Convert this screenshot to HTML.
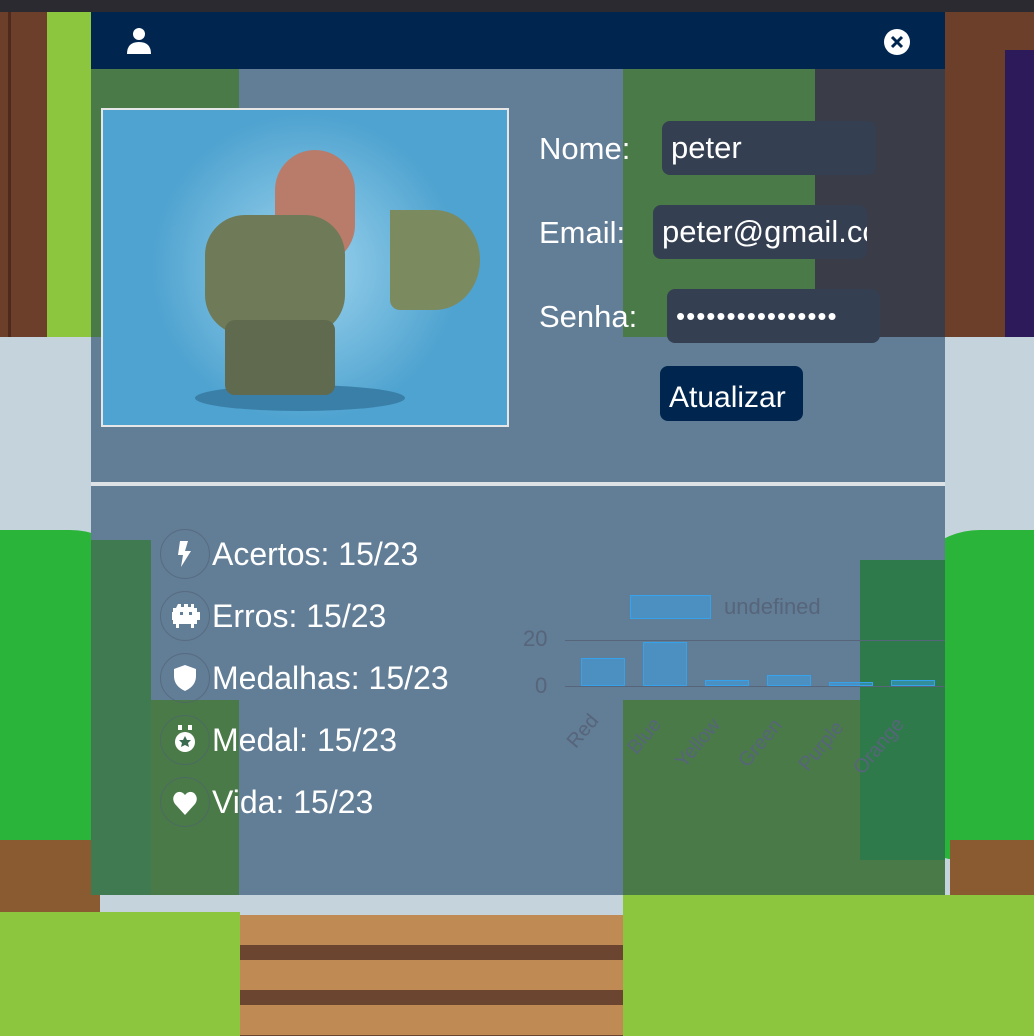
<!DOCTYPE html>
<html><head><meta charset="utf-8"><style>
*{margin:0;padding:0;box-sizing:border-box}
body{width:1034px;height:1036px;position:relative;overflow:hidden;background:#c5d3dc;font-family:"Liberation Sans",sans-serif}
.a{position:absolute}
.lbl{position:absolute;color:#fff;font-size:31px}
.inp{position:absolute;background:#343f52;border-radius:8px;color:#fff;font-size:31px;padding:9px 9px;overflow:hidden;white-space:nowrap;height:54px}
.st{position:absolute;left:212px;color:#fff;font-size:32px}
.ic{position:absolute;left:160px;width:50px;height:50px;border-radius:50%;border:1px solid rgba(80,95,115,.6)}
.ig{position:absolute;left:172px}
</style></head><body>
<div class="a" style="left:0;top:0;width:1034px;height:12px;background:#2a2a30"></div>
<div class="a" style="left:0;top:12px;width:47px;height:325px;background:#6b3f2a"></div>
<div class="a" style="left:8px;top:12px;width:3px;height:325px;background:#4d2a1c"></div>
<div class="a" style="left:47px;top:12px;width:44px;height:325px;background:#8cc63f"></div>
<div class="a" style="left:945px;top:12px;width:89px;height:325px;background:#6b3f2a"></div>
<div class="a" style="left:1005px;top:50px;width:29px;height:287px;background:#2c1a5a"></div>
<div class="a" style="left:0;top:530px;width:150px;height:330px;background:#2ab43a;border-radius:0 80px 60px 0"></div>
<div class="a" style="left:0;top:840px;width:100px;height:75px;background:#8a5a30"></div>
<div class="a" style="left:900px;top:530px;width:134px;height:330px;background:#2ab43a;border-radius:80px 0 0 60px"></div>
<div class="a" style="left:950px;top:840px;width:84px;height:75px;background:#8a5a30"></div>
<div class="a" style="left:0;top:912px;width:240px;height:124px;background:#8cc63f"></div>
<div class="a" style="left:623px;top:895px;width:411px;height:141px;background:#8cc63f"></div>
<div class="a" style="left:240px;top:915px;width:383px;height:121px;background:repeating-linear-gradient(#c08a55 0 30px,#6b4530 30px 45px)"></div>
<div class="a" style="left:91px;top:12px;width:854px;height:883px;background:#627d96"></div>
<div class="a" style="left:91px;top:69px;width:148px;height:268px;background:#4a7a48"></div>
<div class="a" style="left:623px;top:69px;width:192px;height:268px;background:#4a7a48"></div>
<div class="a" style="left:815px;top:69px;width:130px;height:268px;background:#3a3d48"></div>
<div class="a" style="left:91px;top:540px;width:60px;height:355px;background:#3f7a50"></div>
<div class="a" style="left:151px;top:700px;width:88px;height:195px;background:#4a7a48"></div>
<div class="a" style="left:623px;top:700px;width:322px;height:195px;background:#4a7a48"></div>
<div class="a" style="left:860px;top:560px;width:85px;height:300px;background:#2f7a4a"></div>
<div class="a" style="left:91px;top:482px;width:854px;height:4px;background:#dde2e6"></div>
<div class="a" style="left:91px;top:12px;width:854px;height:57px;background:#002650"></div>
<svg class="a" style="left:126px;top:27px" width="26" height="28" viewBox="0 0 26 28"><circle cx="13" cy="7" r="6" fill="#fff"/><path d="M1 27 Q1 15 13 15 Q25 15 25 27Z" fill="#fff"/></svg>
<svg class="a" style="left:883px;top:28px" width="28" height="28"><circle cx="14" cy="14" r="13" fill="#fff"/><path d="M9 9L19 19M19 9L9 19" stroke="#002650" stroke-width="3"/></svg>
<div class="a" style="left:101px;top:108px;width:408px;height:319px;background:radial-gradient(circle at 50% 50%,#9ed4ee,#4fa3d0 60%);border:2px solid #e6e6e6"></div>
<div class="a" style="left:195px;top:385px;width:210px;height:26px;border-radius:50%;background:#3a7fa8"></div>
<div class="a" style="left:275px;top:150px;width:80px;height:115px;border-radius:40px;background:#b97c6a"></div>
<div class="a" style="left:205px;top:215px;width:140px;height:120px;border-radius:40px;background:#6e7a58"></div>
<div class="a" style="left:225px;top:320px;width:110px;height:75px;background:#5f6a4e;border-radius:10px"></div>
<div class="a" style="left:390px;top:210px;width:90px;height:100px;background:#7c8a60;border-radius:0 50% 50% 10px"></div>
<div class="lbl" style="left:539px;top:131px">Nome:</div>
<div class="lbl" style="left:539px;top:215px">Email:</div>
<div class="lbl" style="left:539px;top:299px">Senha:</div>
<div class="inp" style="left:662px;top:121px;width:214px">peter</div>
<div class="inp" style="left:653px;top:205px;width:214px">peter@gmail.com</div>
<div class="inp" style="left:667px;top:289px;width:213px;letter-spacing:1px;font-size:26px;padding-top:12px">••••••••••••••••</div>
<div class="a" style="left:660px;top:366px;width:143px;height:55px;background:#002650;border-radius:8px;color:#fff;font-size:30px;padding:15px 0 0 9px;white-space:nowrap">Atualizar</div>
<div class="ic" style="top:529px"></div><div class="ic" style="top:591px"></div><div class="ic" style="top:653px"></div><div class="ic" style="top:715px"></div><div class="ic" style="top:777px"></div>
<svg class="ig" style="top:540px" width="26" height="28" viewBox="0 0 26 28"><path d="M8 1H16L13 11H19L9 27L11 15H6Z" fill="#fff"/></svg>
<svg class="ig" style="top:604px" width="28" height="24" viewBox="0 0 28 24"><path d="M6 0h3v3h3v-3h4v3h3v-3h3v4h3v4h3v8h-3v4h-3v4h-3v-4h-12v4h-3v-4h-3v-4h-3v-8h3v-4h3z" fill="#fff"/><rect x="8" y="8" width="3" height="3" fill="#627d96"/><rect x="17" y="8" width="3" height="3" fill="#627d96"/></svg>
<svg class="ig" style="top:664px" width="26" height="28" viewBox="0 0 26 28"><path d="M13 1L24 5V12Q24 22 13 27Q2 22 2 12V5Z" fill="#fff"/></svg>
<svg class="ig" style="top:724px" width="26" height="30" viewBox="0 0 26 30"><rect x="6" y="1" width="4" height="5" fill="#fff"/><rect x="16" y="1" width="4" height="5" fill="#fff"/><circle cx="13" cy="18" r="10" fill="#fff"/><path d="M13 12l2 4h4l-3 3 1 4-4-2-4 2 1-4-3-3h4z" fill="#3a6a50"/></svg>
<svg class="ig" style="top:790px" width="26" height="26" viewBox="0 0 26 26"><path d="M13 25L3 14Q-1 8 4 3Q9 0 13 5Q17 0 22 3Q27 8 23 14Z" fill="#fff"/></svg>
<div class="st" style="top:536px">Acertos: 15/23</div>
<div class="st" style="top:598px">Erros: 15/23</div>
<div class="st" style="top:660px">Medalhas: 15/23</div>
<div class="st" style="top:722px">Medal: 15/23</div>
<div class="st" style="top:784px">Vida: 15/23</div>
<div class="a" style="left:630px;top:595px;width:81px;height:24px;background:rgba(54,162,235,.5);border:1px solid #36a2eb"></div>
<div class="a" style="left:724px;top:594px;color:#56657a;font-size:22px">undefined</div>
<div class="a" style="left:523px;top:626px;color:#56657a;font-size:22px">20</div>
<div class="a" style="left:535px;top:673px;color:#56657a;font-size:22px">0</div>
<div class="a" style="left:565px;top:640px;width:380px;height:1px;background:#56657a"></div>
<div class="a" style="left:565px;top:686px;width:380px;height:1px;background:#56657a"></div>
<div class="a" style="left:581px;top:658px;width:44px;height:28px;background:rgba(54,162,235,.5);border:1px solid #36a2eb"></div>
<div class="a" style="left:643px;top:642px;width:44px;height:44px;background:rgba(54,162,235,.5);border:1px solid #36a2eb"></div>
<div class="a" style="left:705px;top:680px;width:44px;height:6px;background:rgba(54,162,235,.5);border:1px solid #36a2eb"></div>
<div class="a" style="left:767px;top:675px;width:44px;height:11px;background:rgba(54,162,235,.5);border:1px solid #36a2eb"></div>
<div class="a" style="left:829px;top:682px;width:44px;height:4px;background:rgba(54,162,235,.5);border:1px solid #36a2eb"></div>
<div class="a" style="left:891px;top:680px;width:44px;height:6px;background:rgba(54,162,235,.5);border:1px solid #36a2eb"></div>
<div class="a" style="left:565px;top:720px;color:#56657a;font-size:20px;transform:rotate(-50deg)">Red</div>
<div class="a" style="left:625px;top:725px;color:#56657a;font-size:20px;transform:rotate(-50deg)">Blue</div>
<div class="a" style="left:670px;top:732px;color:#56657a;font-size:20px;transform:rotate(-50deg)">Yellow</div>
<div class="a" style="left:733px;top:732px;color:#56657a;font-size:20px;transform:rotate(-50deg)">Green</div>
<div class="a" style="left:793px;top:735px;color:#56657a;font-size:20px;transform:rotate(-50deg)">Purple</div>
<div class="a" style="left:846px;top:735px;color:#56657a;font-size:20px;transform:rotate(-50deg)">Orange</div>
</body></html>
